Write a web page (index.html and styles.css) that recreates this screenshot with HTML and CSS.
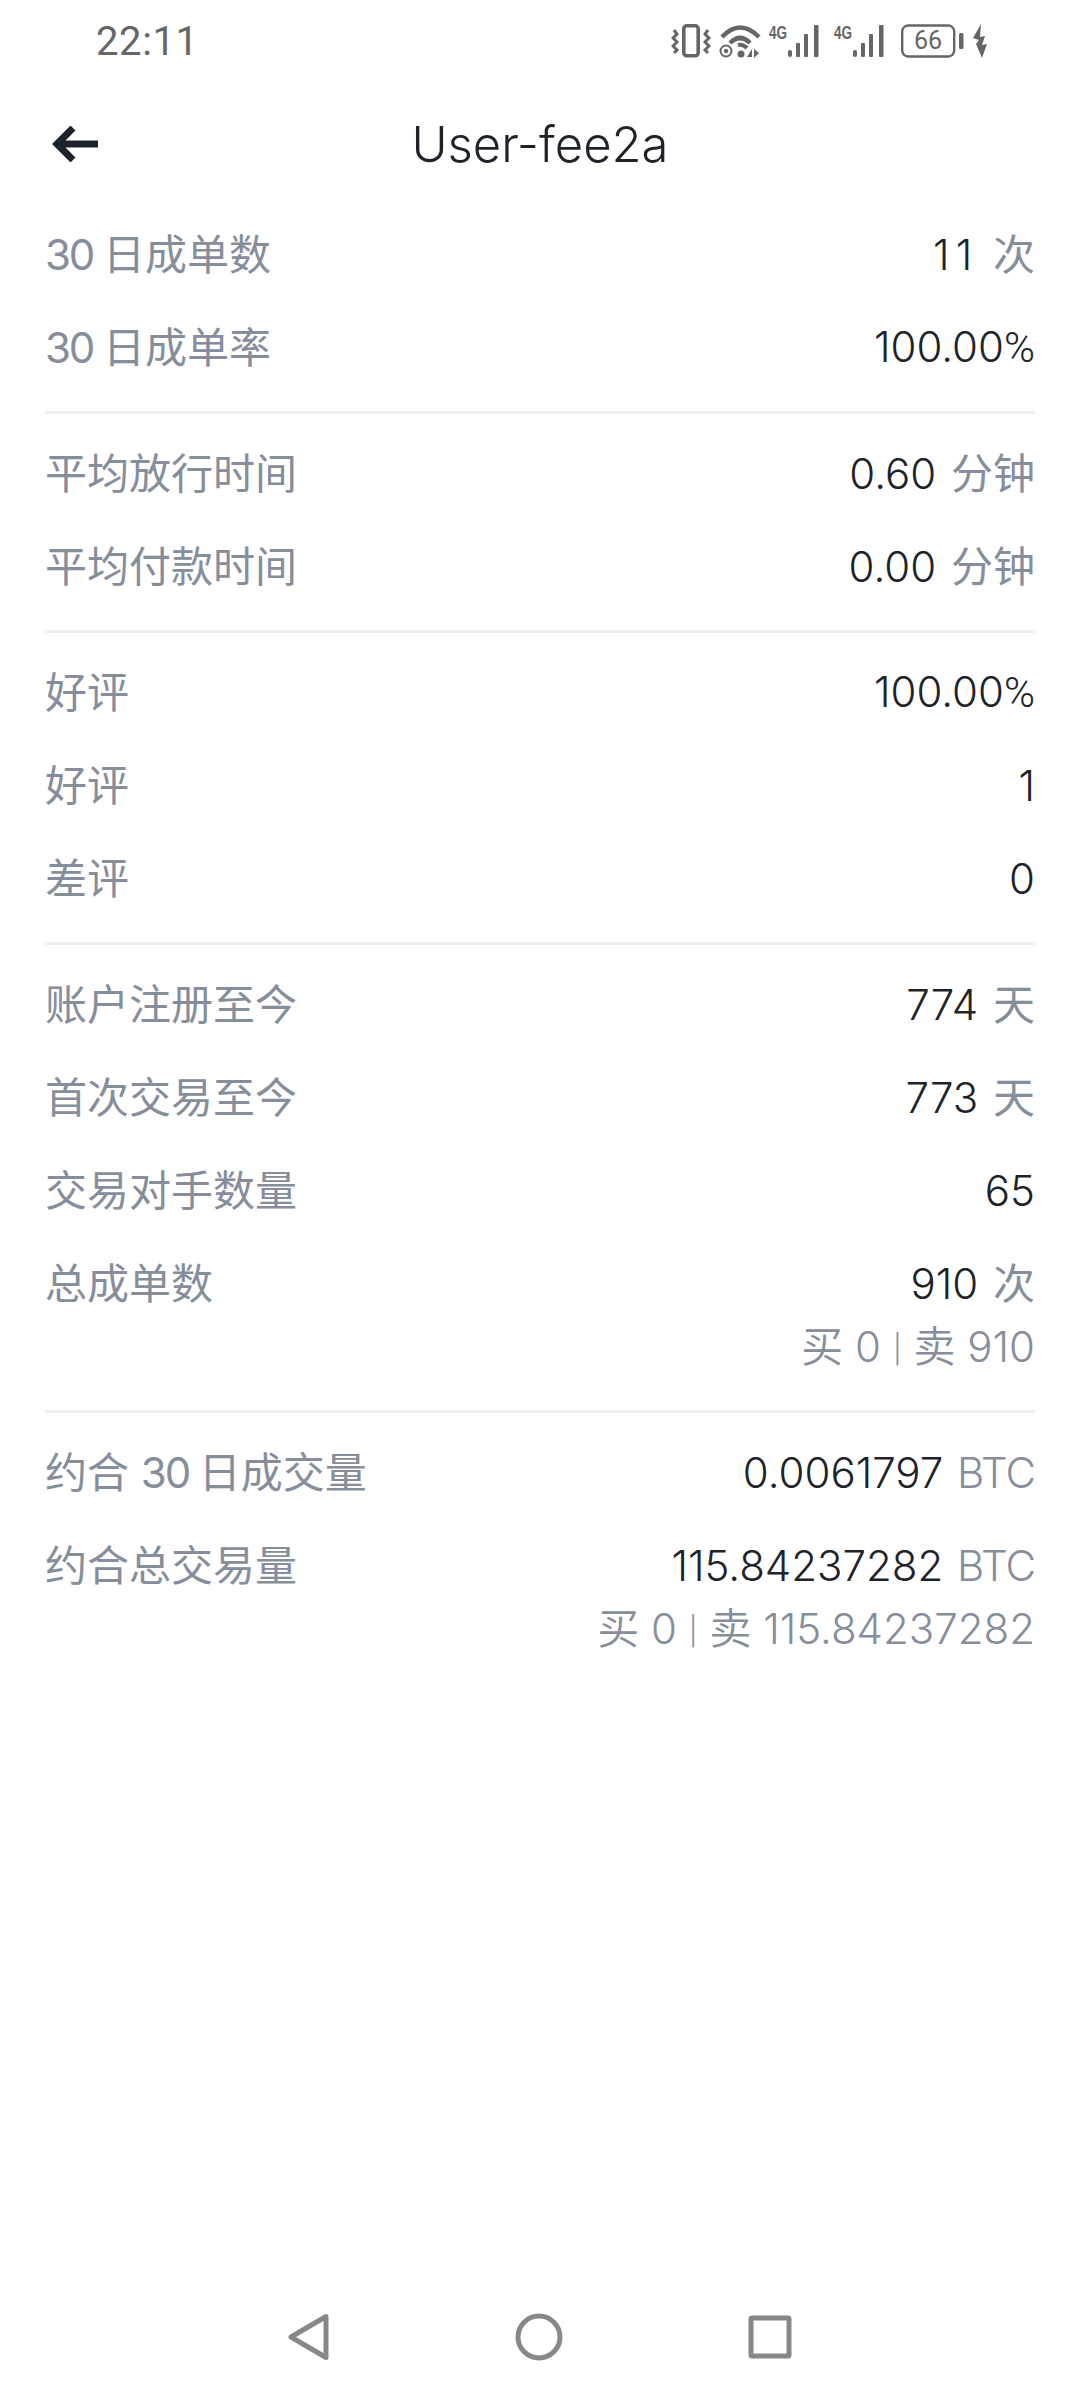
FILE: index.html
```html
<!DOCTYPE html>
<html lang="zh-CN">
<head>
    <meta charset="UTF-8">
    <meta name="viewport" content="width=device-width, initial-scale=1.0">
    <title>User-fee2a</title>
    <link rel="stylesheet" href="styles.css">
</head>
<body>

    <div class="status-bar">
        <span class="time">22:11</span>
        <div class="status-icons">
            <svg class="ic-vibrate" width="40" height="34" viewBox="0 0 40 34" fill="none" stroke="#666">
                <rect x="12.800" y="1.800" width="14.400" height="30" rx="3" stroke-width="3.600"/>
                <path d="M3 6l3 4-4 4 4 4-4 4 4 4-3 3M37 6l-3 4 4 4-4 4 4 4-4 4 3 3" stroke-width="3"/>
            </svg>
            <svg class="ic-wifi" width="44" height="34" viewBox="0 0 44 34" fill="none" stroke="#666">
                <path d="M5 13Q23-6 42 13M13 19Q23 9 33 19" stroke-width="4.500"/>
                <path d="M21 21q5-1 9 3" stroke-width="4"/>
                <circle cx="9" cy="27" r="5.500" stroke-width="2"/>
                <circle cx="9" cy="27" r="2.200" fill="#666" stroke="none"/>
                <circle cx="24" cy="30" r="3.500" fill="#666" stroke="none"/>
                <path d="M30 33h5V25zM37 25v9l5-5z" fill="#666" stroke="none"/>
            </svg>
            <svg class="ic-signal" width="53" height="38" viewBox="0 -4 53 38">
                <text x="0" y="15" class="net-label" textLength="18" lengthAdjust="spacingAndGlyphs">4G</text>
                <rect x="19" y="26" width="4" height="7" rx="2" fill="#666"/>
                <rect x="27" y="19" width="4" height="14" rx="1" fill="#666"/>
                <rect x="35" y="10" width="4" height="23" rx="1" fill="#666"/>
                <rect x="45" y="1" width="4.500" height="32" rx="1" fill="#666"/>
            </svg>
            <svg class="ic-signal" width="53" height="38" viewBox="0 -4 53 38">
                <text x="0" y="15" class="net-label" textLength="18" lengthAdjust="spacingAndGlyphs">4G</text>
                <rect x="19" y="26" width="4" height="7" rx="2" fill="#666"/>
                <rect x="27" y="19" width="4" height="14" rx="1" fill="#666"/>
                <rect x="35" y="10" width="4" height="23" rx="1" fill="#666"/>
                <rect x="45" y="1" width="4.500" height="32" rx="1" fill="#666"/>
            </svg>
            <svg class="ic-battery" width="63" height="34" viewBox="0 0 63 34" fill="none">
                <rect x="1.200" y="1.500" width="52" height="31" rx="6" stroke="#666" stroke-width="2.400"/>
                <text x="27" y="25" class="battery-label" text-anchor="middle">66</text>
                <rect x="58" y="9" width="4.500" height="16" rx="1.500" fill="#666"/>
            </svg>
            <svg class="ic-bolt" width="15" height="34" viewBox="0 0 15 34">
                <path d="M8 0L0 14l6 2-3 4 6 14 5-14-5 1 3-9-5 1z" fill="#666"/>
            </svg>
        </div>
    </div>

    <div class="header">
        <svg class="back" width="46" height="36" viewBox="0 0 46 36" fill="none" stroke="#1e2329" stroke-width="7">
            <path d="M46 18H5M21 2L5 18l16 16"/>
        </svg>
        <h1>User-fee2a</h1>
        <div class="header-side"></div>
    </div>

    <div class="stats">
        <div class="group">
            <div class="row"><span class="label"><span class="num">30 </span>日成单数</span><span class="value"><span class="wide">11</span> <em>次</em></span></div>
            <div class="row"><span class="label"><span class="num">30 </span>日成单率</span><span class="value">100.00<span class="pct">%</span></span></div>
        </div>
        <div class="group">
            <div class="row"><span class="label">平均放行时间</span><span class="value">0.60 <em>分钟</em></span></div>
            <div class="row"><span class="label">平均付款时间</span><span class="value">0.00 <em>分钟</em></span></div>
        </div>
        <div class="group">
            <div class="row"><span class="label">好评</span><span class="value">100.00<span class="pct">%</span></span></div>
            <div class="row"><span class="label">好评</span><span class="value">1</span></div>
            <div class="row"><span class="label">差评</span><span class="value">0</span></div>
        </div>
        <div class="group">
            <div class="row"><span class="label">账户注册至今</span><span class="value">774 <em>天</em></span></div>
            <div class="row"><span class="label">首次交易至今</span><span class="value">773 <em>天</em></span></div>
            <div class="row"><span class="label">交易对手数量</span><span class="value">65</span></div>
            <div class="row"><span class="label">总成单数</span><span class="value">910 <em>次</em></span></div>
            <div class="sub">买 0 <span class="sep">|</span> 卖 910</div>
        </div>
        <div class="group">
            <div class="row"><span class="label">约合 <span class="num">30 </span>日成交量</span><span class="value">0.0061797 <em class="coin">BTC</em></span></div>
            <div class="row"><span class="label">约合总交易量</span><span class="value">115.84237282 <em class="coin">BTC</em></span></div>
            <div class="sub">买 0 <span class="sep">|</span> 卖 115.84237282</div>
        </div>
    </div>

    <div class="nav-bar">
        <svg width="42" height="48" viewBox="0 0 42 48" fill="none" stroke="#888" stroke-width="5" stroke-linejoin="round">
            <path d="M38 3.500V44.500L3 24z"/>
        </svg>
        <svg width="48" height="48" viewBox="0 0 48 48" fill="none" stroke="#888" stroke-width="5">
            <circle cx="24" cy="24" r="21"/>
        </svg>
        <svg width="44" height="44" viewBox="0 0 44 44" fill="none" stroke="#888" stroke-width="5" stroke-linejoin="round">
            <rect x="3" y="3" width="38" height="38" rx="1"/>
        </svg>
    </div>

</body>
</html>
```

FILE: styles.css
```css
* {
    box-sizing: border-box;
    margin: 0;
    padding: 0;
}

body {
    position: relative;
    width: 1080px;
    height: 2400px;
    background: #fff;
    font-family: Inter, "Noto Sans CJK SC", sans-serif;
    overflow: hidden;
}

/* Status bar */
.status-bar {
    display: flex;
    justify-content: space-between;
    align-items: center;
    height: 84px;
    padding: 0 92px 2px 96px;
    color: #666;
}

.time {
    font-family: Roboto, sans-serif;
    font-size: 40px;
    letter-spacing: 0.6px;
}

.status-icons {
    display: flex;
    align-items: center;
}

.ic-wifi { margin-left: 6px; }
.ic-signal { margin: -4px 0 0 8px; }
.ic-signal + .ic-signal { margin-left: 12px; }
.ic-battery { margin-left: 14px; }
.ic-bolt { margin-left: 9px; }

.net-label {
    font-family: "Liberation Sans", sans-serif;
    font-weight: 700;
    font-size: 19px;
    fill: #666;
}

.battery-label {
    font-family: Roboto, sans-serif;
    font-size: 25px;
    fill: #666;
}

/* Header */
.header {
    display: flex;
    align-items: center;
    height: 120px;
    padding: 0 52px;
}

.back,
.header-side {
    flex: 0 0 46px;
}

.header h1 {
    flex: 1;
    text-align: center;
    font-size: 49px;
    font-weight: 350;
    color: #1e2329;
}

/* Stat rows */
.stats {
    padding: 4px 45px 0;
}

.group {
    padding: 0 0 17px;
    margin-bottom: 13px;
    border-bottom: 3px solid #eeeff1;
}

.group:last-child {
    border-bottom: none;
}

.row {
    display: flex;
    justify-content: space-between;
    align-items: center;
    height: 93px;
    font-size: 42px;
    line-height: 50px;
}

.label,
.value em,
.sub {
    color: #868e9b;
}

.label .num {
    letter-spacing: -0.05em;
}

.value {
    color: #1e2329;
    font-weight: 350;
}

.value em {
    font-style: normal;
    font-weight: 400;
    margin-left: 3px;
}

.value em.coin {
    margin-left: 2px;
    letter-spacing: -1px;
    font-weight: 350;
}

.value .wide {
    letter-spacing: 6px;
}

.value .pct {
    font-family: Roboto, sans-serif;
    font-weight: 300;
}

.sub {
    height: 93px;
    margin-top: -30px;
    line-height: 93px;
    text-align: right;
    font-size: 42px;
    font-weight: 350;
}

.sep {
    font-size: 28px;
    vertical-align: 3px;
}

/* Android nav */
.nav-bar {
    position: absolute;
    left: 0;
    right: 0;
    bottom: 39px;
    display: flex;
    align-items: center;
    justify-content: space-between;
    padding: 0 288px;
}
```
